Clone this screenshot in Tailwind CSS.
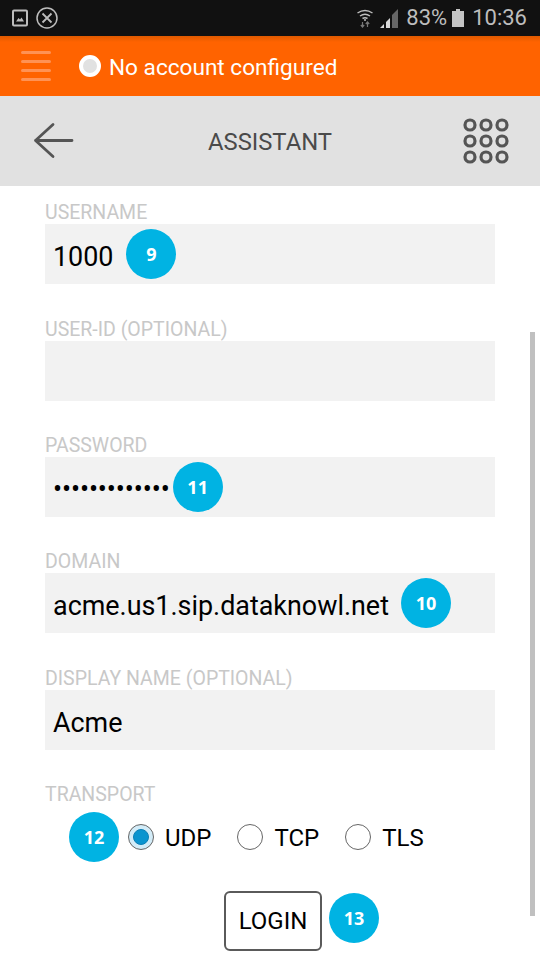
<!DOCTYPE html>
<html lang="en">
<head>
    <meta charset="UTF-8">
    <meta name="viewport" content="width=device-width, initial-scale=1.0">
    <title>Assistant</title>
    <script src="https://cdn.jsdelivr.net/npm/@tailwindcss/browser@4"></script>
</head>
<body class="relative w-[540px] h-[960px] overflow-hidden bg-white font-['Roboto',sans-serif]">
    <!-- status bar -->
    <div class="flex items-center h-9 bg-[#111111] text-[#bdbdbd]">
        <svg class="ml-3 w-4 h-[18px]" viewBox="0 0 16 18">
            <rect x="1" y="1.5" width="14" height="15" rx="1" fill="none" stroke="#bdbdbd" stroke-width="2"/>
            <path d="M4 12.5 L6.5 9 L8 10.5 L9.5 8.5 L12 12.5 Z" fill="#bdbdbd"/>
        </svg>
        <svg class="ml-[8px] w-[22px] h-[22px]" viewBox="0 0 22 22" fill="none" stroke="#bdbdbd">
            <circle cx="11" cy="11" r="10" stroke-width="1.5"/>
            <path d="M6.5 6.5 L15.5 15.5 M15.5 6.5 L6.5 15.5" stroke-width="1.8"/>
        </svg>
        <svg class="ml-auto w-[18px] h-[20px]" viewBox="0 0 18 20" fill="none" stroke="#bdbdbd" stroke-width="1.5">
            <path d="M1.5 5 Q9 0 16.5 5 M4 8 Q9 4.5 14 8 M6.5 10.5 Q9 9 11.5 10.5"/>
            <circle cx="9" cy="12" r="1" fill="#bdbdbd" stroke="none"/>
            <path d="M6.5 14 V19 M4.8 17 L6.5 19 L8.2 17 M11.5 19 V14 M9.8 16 L11.5 14 L13.2 16" stroke="#777777" stroke-width="1.2"/>
        </svg>
        <svg class="ml-[6px] w-[18px] h-[19px]" viewBox="0 0 18 19">
            <path d="M18 0 V19 H12 V6 Z" fill="#666666"/>
            <path d="M0 19 L4 15 V19 Z M6 19 V13 L10 9 V19 Z" fill="#d8d8d8"/>
        </svg>
        <span class="ml-2 text-[22px] leading-none">83%</span>
        <svg class="ml-[5px] w-3 h-[18px]" viewBox="0 0 12 18">
            <path d="M4 0 H8 V2 H12 V18 H0 V2 H4 Z" fill="#c4c4c4"/>
        </svg>
        <span class="ml-2 mr-[13px] text-[22px] leading-none">10:36</span>
    </div>

    <!-- account bar -->
    <div class="flex items-center h-[60px] bg-gradient-to-b from-[#df5a00] from-0% to-[#ff6300] to-[10%]">
        <div class="ml-[21px] flex flex-col gap-[6px] w-[30px]">
            <div class="h-[3px] rounded-full bg-[#ff9254]"></div>
            <div class="h-[3px] rounded-full bg-[#ff9254]"></div>
            <div class="h-[3px] rounded-full bg-[#ff9254]"></div>
            <div class="h-[3px] rounded-full bg-[#ff9254]"></div>
        </div>
        <div class="ml-[28px] w-[22px] h-[22px] rounded-full bg-[#e1e1e1] border-[4px] border-white"></div>
        <span class="ml-[8px] pt-[4px] text-[22.6px] leading-none text-white">No account configured</span>
    </div>

    <!-- title bar -->
    <div class="flex items-center justify-between h-[90px] bg-[#e1e1e1]">
        <svg class="ml-[33px] w-[42px] h-[38px]" viewBox="0 0 42 38" fill="none" stroke="#555555" stroke-width="2.8" stroke-linecap="round" stroke-linejoin="round">
            <path d="M2.5 18.5 H39 M20 2.5 L2.5 18.5 L20 34.5"/>
        </svg>
        <span class="ml-[2px] pt-[4px] text-[23.8px] leading-none text-[#4a4a4a]">ASSISTANT</span>
        <svg class="mr-[31px] w-[46px] h-[46px]" viewBox="0 0 46 46" fill="none" stroke="#555555" stroke-width="3.2">
            <circle cx="7" cy="7" r="5"/><circle cx="23" cy="7" r="5"/><circle cx="39" cy="7" r="5"/>
            <circle cx="7" cy="23" r="5"/><circle cx="23" cy="23" r="5"/><circle cx="39" cy="23" r="5"/>
            <circle cx="7" cy="39" r="5"/><circle cx="23" cy="39" r="5"/><circle cx="39" cy="39" r="5"/>
        </svg>
    </div>

    <!-- form -->
    <div class="flex flex-col px-[45px] pt-[15px]">
        <div class="h-[23px] text-[19.5px] leading-[23px] text-[#c8c8c8]">USERNAME</div>
        <div class="flex items-center h-[60px] mb-[34px] pl-[8px] bg-[#f2f2f2] text-[26.9px] text-black">
            <span class="pt-[6px]">1000</span>
            <div class="ml-[13px] flex items-center justify-center w-[50px] h-[50px] rounded-full bg-[#00b3e3] font-['Open_Sans',sans-serif] font-bold text-[18px] text-white">9</div>
        </div>

        <div class="h-[23px] text-[19.5px] leading-[23px] text-[#c8c8c8]">USER-ID (OPTIONAL)</div>
        <div class="h-[60px] mb-[33px] bg-[#f2f2f2]"></div>

        <div class="h-[23px] text-[19.5px] leading-[23px] text-[#c8c8c8]">PASSWORD</div>
        <div class="flex items-center h-[60px] mb-[33px] pl-[8px] bg-[#f2f2f2] text-[26.9px] text-black">
            <span class="pt-[4px] tracking-[-0.1px]">•••••••••••••</span>
            <div class="ml-[3px] flex items-center justify-center w-[50px] h-[50px] rounded-full bg-[#00b3e3] font-['Open_Sans',sans-serif] font-bold text-[18px] text-white">11</div>
        </div>

        <div class="h-[23px] text-[19.5px] leading-[23px] text-[#c8c8c8]">DOMAIN</div>
        <div class="flex items-center h-[60px] mb-[34px] pl-[8px] bg-[#f2f2f2] text-[26.9px] text-black">
            <span class="pt-[6px]">acme.us1.sip.dataknowl.net</span>
            <div class="ml-[12px] flex items-center justify-center w-[50px] h-[50px] rounded-full bg-[#00b3e3] font-['Open_Sans',sans-serif] font-bold text-[18px] text-white">10</div>
        </div>

        <div class="h-[23px] text-[19.5px] leading-[23px] text-[#c8c8c8]">DISPLAY NAME (OPTIONAL)</div>
        <div class="flex items-center h-[60px] mb-[33px] pl-[8px] bg-[#f2f2f2] text-[26.9px] text-black">
            <span class="pt-[6px]">Acme</span>
        </div>

        <div class="h-[23px] text-[19.5px] leading-[23px] text-[#c8c8c8]">TRANSPORT</div>
        <div class="flex items-center mt-[6px] ml-[24px] h-[50px] text-[24px] text-black">
            <div class="flex items-center justify-center w-[50px] h-[50px] rounded-full bg-[#00b3e3] font-['Open_Sans',sans-serif] font-bold text-[18px] text-white">12</div>
            <div class="ml-[9px] flex items-center justify-center w-[26px] h-[26px] rounded-full border border-[#666666] bg-[#d3ecf8]">
                <div class="w-[16px] h-[16px] rounded-full border border-[#0b7fb5] bg-[#0a94cf]"></div>
            </div>
            <span class="ml-[11px] pt-[2px]">UDP</span>
            <div class="ml-[26px] w-[26px] h-[26px] rounded-full border border-[#666666] bg-white"></div>
            <span class="ml-[11px] pt-[2px]">TCP</span>
            <div class="ml-[26px] w-[26px] h-[26px] rounded-full border border-[#666666] bg-white"></div>
            <span class="ml-[11px] pt-[2px]">TLS</span>
        </div>

        <div class="flex items-center mt-[29px] ml-[179px]">
            <div class="flex items-center justify-center w-[98px] h-[60px] rounded-[6px] border-2 border-[#5a5a5a] bg-white text-[24px] text-black">LOGIN</div>
            <div class="ml-[7px] mb-[6px] flex items-center justify-center w-[50px] h-[50px] rounded-full bg-[#00b3e3] font-['Open_Sans',sans-serif] font-bold text-[18px] text-white">13</div>
        </div>
    </div>

    <!-- scrollbar -->
    <div class="absolute left-[530px] top-[332px] w-[5px] h-[584px] bg-[#c0c0c0]"></div>
</body>
</html>
